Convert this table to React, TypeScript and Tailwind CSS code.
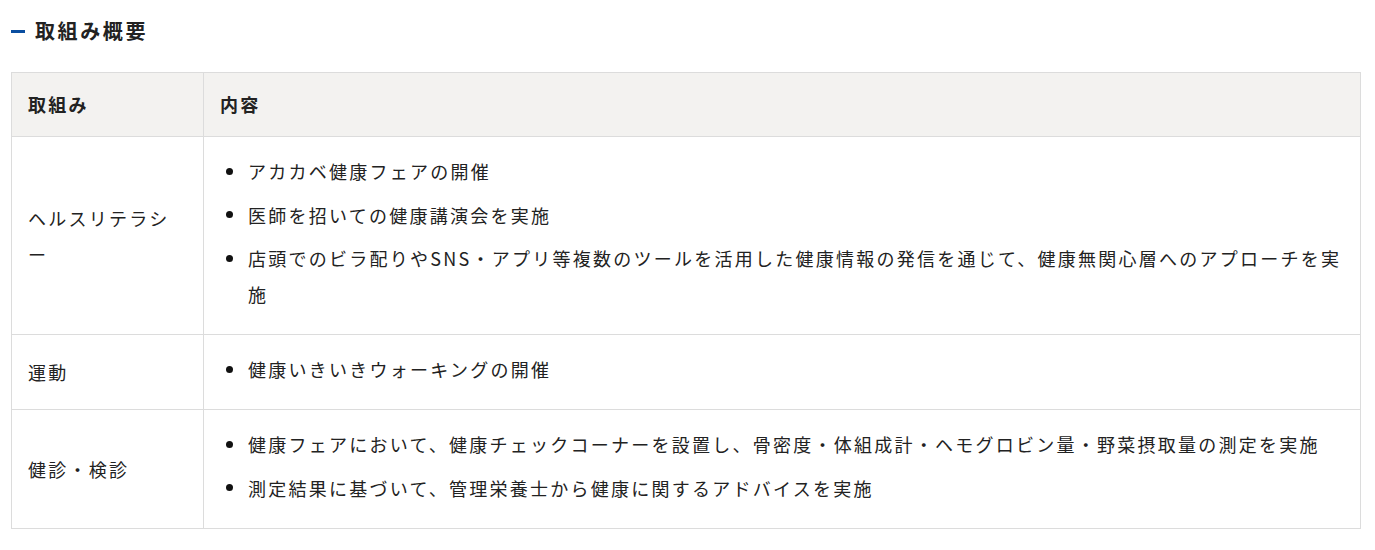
const rows: { label: string; items: string[] }[] = [
  {
    label: "ヘルスリテラシー",
    items: [
      "アカカベ健康フェアの開催",
      "医師を招いての健康講演会を実施",
      "店頭でのビラ配りやSNS・アプリ等複数のツールを活用した健康情報の発信を通じて、健康無関心層へのアプローチを実施",
    ],
  },
  {
    label: "運動",
    items: ["健康いきいきウォーキングの開催"],
  },
  {
    label: "健診・検診",
    items: [
      "健康フェアにおいて、健康チェックコーナーを設置し、骨密度・体組成計・ヘモグロビン量・野菜摂取量の測定を実施",
      "測定結果に基づいて、管理栄養士から健康に関するアドバイスを実施",
    ],
  },
];

export default function App() {
  return (
    <div
      className="bg-white pl-[11px] pr-[14px] pt-[17px] text-[#222]"
      style={{ fontFamily: '"Noto Sans CJK JP", "Noto Sans", sans-serif' }}
    >
      <h2 className="flex items-center gap-[10px] text-[20px] font-bold leading-[28px] tracking-[2.6px]">
        <span className="h-[3px] w-[14px] bg-[#0a4ea0]" />
        取組み概要
      </h2>
      <table className="mt-[27px] w-full border-collapse border border-[#dcdcdc] text-[18px] tracking-[2.25px]">
        <thead>
          <tr className="bg-[#f3f2f0]">
            <th className="h-[64px] w-[192px] border border-[#dcdcdc] px-4 text-left font-bold">取組み</th>
            <th className="border border-[#dcdcdc] px-4 text-left font-bold">内容</th>
          </tr>
        </thead>
        <tbody>
          {rows.map((r) => (
            <tr key={r.label}>
              <td className="border border-[#dcdcdc] px-4 align-middle leading-[36px]">{r.label}</td>
              <td className="border border-[#dcdcdc] pl-4 pr-4 pt-[16px] pb-[22px] align-top">
                <ul className="flex flex-col gap-[7.5px]">
                  {r.items.map((it) => (
                    <li key={it} className="flex leading-[36px]">
                      <span className="flex h-[36px] w-[28px] shrink-0 items-center pl-[6px]">
                        <span className="h-[7px] w-[7px] rounded-full bg-[#111]" />
                      </span>
                      <span>{it}</span>
                    </li>
                  ))}
                </ul>
              </td>
            </tr>
          ))}
        </tbody>
      </table>
    </div>
  );
}
